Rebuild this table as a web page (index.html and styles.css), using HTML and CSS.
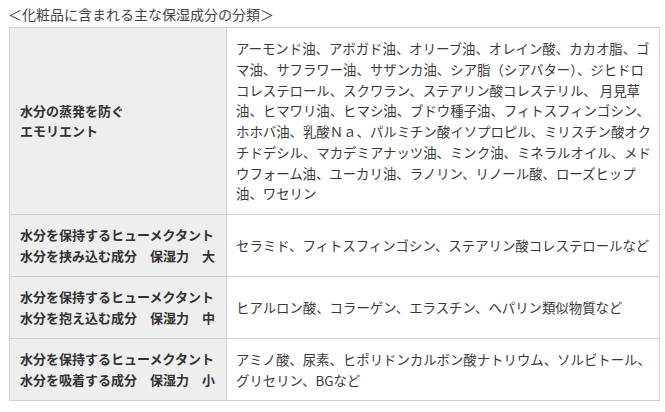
FILE: index.html
```html
<!DOCTYPE html>
<html lang="ja">

<head>
    <meta charset="UTF-8">
    <meta name="viewport" content="width=device-width, initial-scale=1.0">
    <title>保湿成分の分類</title>
    <link rel="stylesheet" href="styles.css">
</head>

<body>
    <p class="caption">＜化粧品に含まれる主な保湿成分の分類＞</p>

    <table class="moist-table">
        <colgroup>
            <col class="col-head">
            <col class="col-body">
        </colgroup>
        <tr>
            <th>水分の蒸発を防ぐ<br>エモリエント</th>
            <td class="long">アーモンド油、アボガド油、オリーブ油、オレイン酸、カカオ脂、ゴマ油、サフラワー油、サザンカ油、シア脂（シアバター）、ジヒドロコレステロール、スクワラン、ステアリン酸コレステリル、 月見草油、ヒマワリ油、ヒマシ油、ブドウ種子油、フィトスフィンゴシン、ホホバ油、乳酸Ｎａ、パルミチン酸イソプロピル、ミリスチン酸オクチドデシル、マカデミアナッツ油、ミンク油、ミネラルオイル、メドウフォーム油、ユーカリ油、ラノリン、リノール酸、ローズヒップ油、ワセリン</td>
        </tr>
        <tr>
            <th>水分を保持するヒューメクタント<br>水分を挟み込む成分　保湿力　大</th>
            <td>セラミド、フィトスフィンゴシン、ステアリン酸コレステロールなど</td>
        </tr>
        <tr>
            <th>水分を保持するヒューメクタント<br>水分を抱え込む成分　保湿力　中</th>
            <td>ヒアルロン酸、コラーゲン、エラスチン、ヘパリン類似物質など</td>
        </tr>
        <tr>
            <th>水分を保持するヒューメクタント<br>水分を吸着する成分　保湿力　小</th>
            <td>アミノ酸、尿素、ヒポリドンカルボン酸ナトリウム、ソルビトール、グリセリン、BGなど</td>
        </tr>
    </table>
</body>
</html>
```

FILE: styles.css
```css
body {
    font-family: "Noto Sans CJK JP", "Noto Sans", sans-serif;
    background-color: #ffffff;
    color: #333333;
    margin: 0;
    padding: 0;
}

.caption {
    margin: 0;
    padding: 4px 0 0 8px;
    height: 23px;
    font-size: 14px;
    line-height: 20px;
    color: #444444;
}

.moist-table {
    margin-left: 9px;
    width: 651px;
    border-collapse: collapse;
    table-layout: fixed;
}

.col-head {
    width: 217px;
}

.moist-table th,
.moist-table td {
    border: 1px solid #d0d0d0;
    padding: 10px 6px 10px 10px;
    line-height: 20.5px;
    vertical-align: middle;
    text-align: left;
}

.moist-table th {
    background-color: #eeeeee;
    font-size: 13px;
    font-weight: bold;
    color: #333333;
    padding-right: 2px;
}

.moist-table td {
    font-size: 13.4px;
    color: #3a3a3a;
    padding-left: 9px;
}

.moist-table td.long {
    line-height: 20.75px;
}
```
